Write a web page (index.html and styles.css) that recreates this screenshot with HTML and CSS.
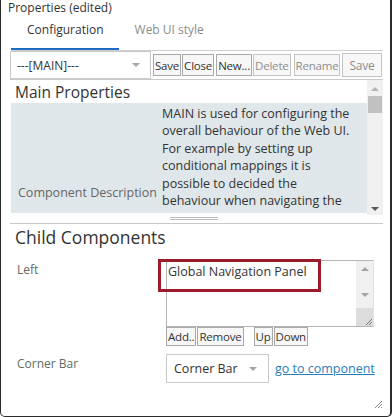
FILE: index.html
```html
<!DOCTYPE html>
<html lang="en">
<head>
    <meta charset="UTF-8">
    <title>Properties (edited)</title>
    <link rel="stylesheet" href="styles.css">
</head>
<body>
    <div class="dialog">
        <div class="dialog-title">Properties (edited)</div>

        <div class="tabs">
            <div class="tab active">Configuration</div>
            <div class="tab">Web UI style</div>
        </div>

        <!-- Component picker + actions -->
        <div class="toolbar">
            <div class="select main-select">
                <span>---[MAIN]---</span>
                <span class="caret"></span>
            </div>
            <button class="btn">Save</button>
            <button class="btn">Close</button>
            <button class="btn gap-2">New...</button>
            <button class="btn" disabled>Delete</button>
            <button class="btn gap-3" disabled>Rename</button>
            <button class="btn btn-large gap-2" disabled>Save</button>
        </div>

        <!-- Main properties, scrollable -->
        <div class="main-props">
            <div class="scroll-content">
                <h2 class="section-title">Main Properties</h2>
                <div class="prop-row">
                    <div class="prop-label">Component Description</div>
                    <div class="prop-value">MAIN is used for configuring the overall behaviour of the Web UI. For example by setting up conditional mappings it is possible to decided the behaviour when navigating the</div>
                </div>
            </div>
            <div class="scrollbar">
                <span class="arrow-up light"></span>
                <span class="thumb"></span>
                <span class="spacer"></span>
                <span class="arrow-down dark"></span>
            </div>
        </div>
        <div class="splitter"><span class="grip"></span></div>

        <!-- Child components -->
        <section class="child">
            <h2 class="section-title large">Child Components</h2>

            <div class="field-row">
                <div class="field-label">Left</div>
                <div class="field-control">
                    <div class="list-box">
                        <div class="list-items">
                            <div class="list-item">Global Navigation Panel</div>
                        </div>
                        <div class="list-scroll">
                            <span class="arrow-up"></span>
                            <span class="spacer"></span>
                            <span class="arrow-down"></span>
                            <span class="list-resize">
                                <svg width="10" height="10" viewBox="0 0 10 10"><path d="M9 3 3 9M9 6 6 9" stroke="#777" stroke-width="1"/></svg>
                            </span>
                        </div>
                        <div class="highlight"></div>
                    </div>
                    <div class="list-buttons">
                        <button class="btn small">Add..</button>
                        <button class="btn small">Remove</button>
                        <button class="btn small gap-10">Up</button>
                        <button class="btn small">Down</button>
                    </div>
                </div>
            </div>

            <div class="field-row corner-row">
                <div class="field-label">Corner Bar</div>
                <div class="field-control inline">
                    <div class="select corner-select">
                        <span>Corner Bar</span>
                        <span class="caret"></span>
                    </div>
                    <a class="link" href="#">go to component</a>
                </div>
            </div>
        </section>

        <div class="resize-corner">
            <svg width="9" height="9" viewBox="0 0 9 9"><path d="M8 1 1 8M8 4 4 8M8 7 7 8" stroke="#8a8a8a" stroke-width="1"/></svg>
        </div>
    </div>
</body>
</html>
```

FILE: styles.css
```css
body {
    margin: 0;
    font-family: 'Open Sans', 'Noto Sans', sans-serif;
    color: #333;
    background: #fff;
}

.dialog {
    box-sizing: border-box;
    position: relative;
    width: 392px;
    height: 417px;
    border: 1px solid #2b2b2b;
    border-top: none;
    border-right-width: 2px;
    border-radius: 0 0 5px 5px;
    overflow: hidden;
}

.dialog-title {
    font-size: 12px;
    line-height: 16px;
    padding-left: 7px;
}

/* Tabs */
.tabs {
    display: flex;
    margin: 0 7px 0 10px;
    border-bottom: 1px solid #cfcfcf;
}

.tab {
    font-size: 12px;
    line-height: 18px;
    padding: 5px 15px 9px 16px;
    border-bottom: 2px solid transparent;
    color: #8c8c8c;
}

.tab.active {
    color: #333;
    border-bottom-color: #1c6dc1;
}

/* Toolbar */
.toolbar {
    display: flex;
    align-items: center;
    height: 28px;
    margin-left: 9px;
}

.select {
    box-sizing: border-box;
    display: flex;
    align-items: center;
    justify-content: space-between;
    border: 1px solid #c9c9c9;
    font-size: 12px;
    color: #333;
    background: #fff;
}

.main-select {
    width: 141px;
    height: 28px;
    padding: 0 10px 0 6px;
}

.caret {
    width: 0;
    height: 0;
    border-left: 4px solid transparent;
    border-right: 4px solid transparent;
    border-top: 4px solid #a6a6a6;
}

.btn {
    box-sizing: border-box;
    height: 22px;
    margin-left: 1px;
    padding: 0 1px;
    font-family: inherit;
    font-size: 11.5px;
    letter-spacing: -0.2px;
    color: #333;
    background: #f7f7f7;
    border: 1px solid #a9a9a9;
    border-radius: 0;
}

.btn:disabled {
    color: #8d8d8d;
    border-color: #c4c4c4;
}

.btn:first-of-type { margin-left: 2px; }
.gap-2 { margin-left: 2px; }
.gap-3 { margin-left: 3px; }
.gap-10 { margin-left: 10px; }

.btn-large {
    height: 24px;
    padding: 0 6px;
    font-size: 12px;
}

/* Main properties panel */
.main-props {
    display: flex;
    height: 135px;
    margin: 0 7px 0 9px;
    border-top: 1px solid #c9c9c9;
}

.scroll-content {
    flex: 1;
    overflow: hidden;
}

.section-title {
    margin: 0;
    padding: 2px 0 0 5px;
    font-size: 15.5px;
    line-height: 21px;
    font-weight: 400;
    color: #333;
}

.prop-row {
    display: flex;
    height: 110px;
    margin-left: 1px;
    overflow: hidden;
    background: #dfe7ea;
}

.prop-label {
    width: 144px;
    flex: none;
    padding: 81px 0 0 7px;
    font-size: 12.5px;
    line-height: 17px;
    color: #666;
    white-space: nowrap;
}

.prop-value {
    width: 192px;
    padding-top: 2px;
    font-size: 12.5px;
    line-height: 17.4px;
    color: #333;
}

.scrollbar,
.list-scroll {
    display: flex;
    flex-direction: column;
    align-items: center;
    background: #f0f0f0;
}

.scrollbar {
    width: 16px;
    padding: 7px 0 4px;
    box-sizing: border-box;
}

.arrow-up,
.arrow-down {
    width: 0;
    height: 0;
    border-left: 4px solid transparent;
    border-right: 4px solid transparent;
}

.arrow-up { border-bottom: 4px solid #a3a3a3; }
.arrow-down { border-top: 4px solid #a3a3a3; }
.arrow-up.light { border-bottom-color: #b4b4b4; }
.arrow-down.dark { border-top-color: #5a5a5a; }

.thumb {
    width: 14px;
    height: 17px;
    margin-top: 5px;
    background: #c1c1c1;
}

.spacer { flex: 1; }

.splitter {
    height: 6px;
    margin: 0 7px 0 9px;
    border-bottom: 1px solid #c9c9c9;
}

.grip {
    display: block;
    width: 48px;
    height: 3px;
    margin: 2px 0 0 160px;
    border-top: 1px solid #bdbdbd;
    background: linear-gradient(#bdbdbd, #bdbdbd) center / 100% 1px no-repeat;
}

/* Child components */
.child {
    margin-left: 9px;
}

.section-title.large {
    padding: 1px 0 0 5px;
    font-size: 17.5px;
    line-height: 24px;
    margin-bottom: 11px;
}

.field-row {
    display: flex;
}

.field-label {
    width: 149px;
    flex: none;
    padding: 2px 0 0 7px;
    font-size: 12px;
    line-height: 16px;
    color: #5f6b5f;
}

.field-control.inline {
    display: flex;
    align-items: center;
}

.list-box {
    position: relative;
    box-sizing: border-box;
    display: flex;
    width: 208px;
    height: 67px;
    border: 1px solid #b5b5b5;
    border-right-color: #e2e2e2;
}

.list-items {
    flex: 1;
    padding: 2px 0 0 1px;
}

.list-item {
    font-size: 12.5px;
    line-height: 17px;
    color: #333;
}

.list-scroll {
    width: 17px;
    padding-top: 6px;
    box-sizing: border-box;
}

.list-scroll .spacer { flex: none; height: 22px; }

.list-resize {
    display: flex;
    align-items: flex-end;
    justify-content: flex-end;
    width: 17px;
    height: 18px;
    margin-top: auto;
    background: #dcdcdc;
}

.highlight {
    position: absolute;
    left: -9px;
    top: -2px;
    box-sizing: border-box;
    width: 163px;
    height: 33px;
    border: 3px solid #9b1b2a;
}

.list-buttons {
    display: flex;
}

.btn.small {
    height: 19px;
    margin-left: 1px;
    padding: 0 1px;
}

.btn.small:first-child { margin-left: 0; }
.btn.small.gap-10 { margin-left: 10px; }

.corner-row {
    margin-top: 8px;
}

.corner-select {
    width: 103px;
    height: 29px;
    padding: 0 11px 0 7px;
    font-size: 12.5px;
}

.link {
    margin-left: 6px;
    font-size: 12.5px;
    color: #2a7dbb;
    text-decoration: underline;
}

.resize-corner {
    position: absolute;
    right: 7px;
    bottom: 7px;
    line-height: 0;
}
```
